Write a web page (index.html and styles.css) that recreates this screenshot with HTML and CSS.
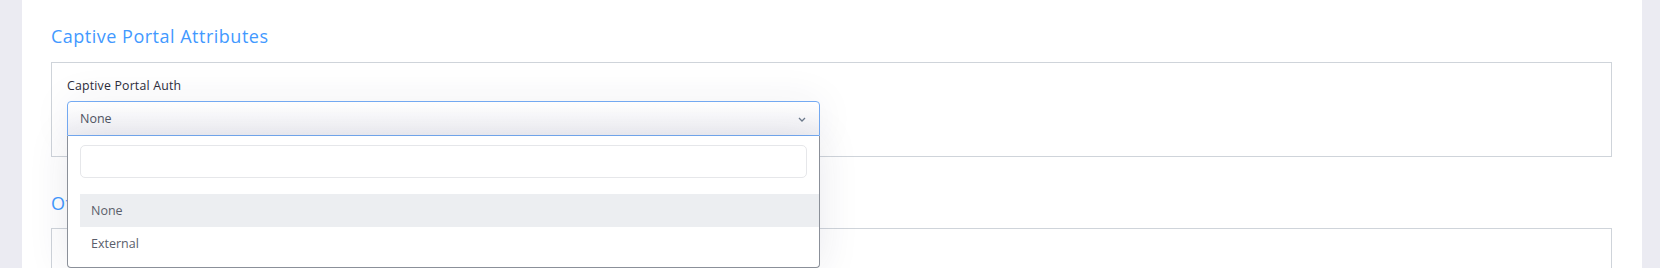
FILE: index.html
```html
<!DOCTYPE html>
<html lang="en">
<head>
    <meta charset="UTF-8">
    <meta name="viewport" content="width=device-width, initial-scale=1.0">
    <title>Captive Portal</title>
    <link rel="stylesheet" href="styles.css">
</head>
<body>
    <div class="page">
        <h2 class="section-title">Captive Portal Attributes</h2>
        <div class="section-box">
            <label class="field-label">Captive Portal Auth</label>
            <div class="select-wrap">
                <div class="select">
                    <span>None</span>
                    <svg class="chevron" width="8" height="5" viewBox="0 0 8 5">
                        <path d="M1 1l3 3 3-3" fill="none" stroke="#6c7a8c" stroke-width="1.3"/>
                    </svg>
                </div>
                <div class="dropdown">
                    <input class="search" type="text">
                    <ul class="options">
                        <li class="active">None</li>
                        <li>External</li>
                    </ul>
                </div>
            </div>
        </div>

        <h2 class="section-title second">Other Attributes</h2>
        <div class="section-box tall"></div>
    </div>
</body>
</html>
```

FILE: styles.css
```css
body {
    margin: 0;
    background-color: #ebebf2;
    font-family: "Open Sans", "Noto Sans", sans-serif;
}
.page {
    background-color: #fff;
    margin: 0 18px 0 22px;
    padding: 23px 30px 0 29px;
    height: 245px;
    overflow: hidden;
}
.section-title {
    margin: 0;
    font-size: 18px;
    font-weight: 500;
    color: #4299ff;
    line-height: 26px;
    height: 39px;
    letter-spacing: 0.5px;
}
.section-title.second {
    margin-top: 33px;
    height: 38px;
}
.section-box {
    border: 1px solid #cfd4da;
    padding: 15px 15px 19px 15px;
    height: 59px;
}
.section-box.tall {
    height: 80px;
}
.field-label {
    display: block;
    font-size: 12.3px;
    color: #2d2d3a;
    line-height: 16px;
    margin-bottom: 7px;
    letter-spacing: 0.2px;
}
.select-wrap {
    position: relative;
    width: 753px;
}
.select {
    display: flex;
    align-items: center;
    justify-content: space-between;
    height: 33px;
    padding: 0 13px 0 12px;
    border: 1px solid #74aaf2;
    border-radius: 4px 4px 0 0;
    background: linear-gradient(#ffffff, #f1f1f5);
    font-size: 12.5px;
    color: #505563;
    box-shadow: 0 0 40px rgba(40, 40, 80, 0.07);
}
.chevron {
    margin-top: 1px;
}
.dropdown {
    position: absolute;
    top: 35px;
    left: 0;
    width: 753px;
    height: 132px;
    border: 1px solid #8b9099;
    border-top: none;
    border-radius: 0 0 4px 4px;
    background-color: #fff;
    box-shadow: 0 0 40px rgba(40, 40, 80, 0.1);
    padding: 9px 0 0 12px;
    box-sizing: border-box;
    z-index: 2;
}
.search {
    display: block;
    box-sizing: border-box;
    width: 727px;
    height: 33px;
    border: 1px solid #e6e7ea;
    border-radius: 5px;
    outline: none;
}
.options {
    list-style: none;
    margin: 16px 0 0 0;
    padding: 0;
}
.options li {
    height: 33px;
    line-height: 33px;
    padding-left: 11px;
    font-size: 12.5px;
    color: #5a5e6b;
}
.options li.active {
    background-color: #eceef1;
}
```
